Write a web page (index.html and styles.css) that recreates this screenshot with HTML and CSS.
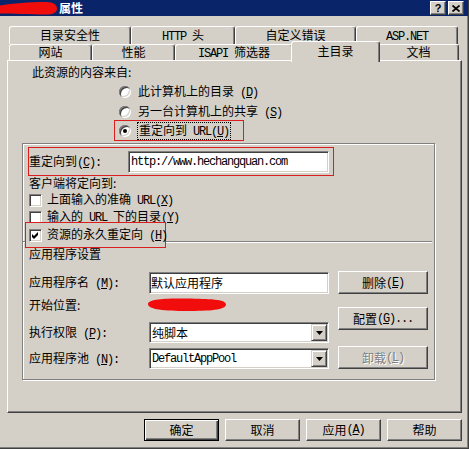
FILE: index.html
```html
<!DOCTYPE html>
<html lang="zh-CN">
<head>
<meta charset="utf-8">
<title>属性</title>
<link rel="stylesheet" href="styles.css">
</head>
<body>
<div class="win">
  <div class="titlebar">
    <svg class="scribble" viewBox="0 0 57 14" width="57" height="14"><path d="M0,4.5 C12,2.5 30,1 46,1 C54,1 57,4 57,7.5 C57,11.5 53,13.5 46,13.5 C30,13.5 12,12.5 0,12.5 Z" fill="#f20d0d"/></svg>
    <span class="title">属性</span>
    <span class="tbbtns">
      <span class="tbb">?</span>
      <span class="tbb"><svg width="8" height="7" viewBox="0 0 8 7"><path d="M0.5,0.5 L7.5,6.5 M7.5,0.5 L0.5,6.5" stroke="#000" stroke-width="1.7"/></svg></span>
    </span>
  </div>

  <div class="tabs">
    <div class="tabrow r1">
      <div class="tab t122">目录安全性</div>
      <div class="tab t104"><span class="m">HTTP </span>头</div>
      <div class="tab t121">自定义错误</div>
      <div class="tab t102"><span class="m">ASP.NET</span></div>
    </div>
    <div class="tabrow r2">
      <div class="tab t83">网站</div>
      <div class="tab t83">性能</div>
      <div class="tab t118"><span class="m">ISAPI </span>筛选器</div>
      <div class="tab sel">主目录</div>
      <div class="tab t81">文档</div>
    </div>
  </div>

  <div class="panel">
    <div class="heading">此资源的内容来自:</div>
    <div class="opts">
      <div class="opt"><span class="radio"></span><span>此计算机上的目录<span class="m"> (<u>D</u>)</span></span></div>
      <div class="opt"><span class="radio"></span><span>另一台计算机上的共享<span class="m"> (<u>S</u>)</span></span></div>
      <div class="opt hl"><span class="radio on"></span><span class="focus">重定向到<span class="m"> URL(<u>U</u>)</span></span></div>
    </div>

    <div class="frame">
      <div class="redir">
        <span class="lbl">重定向到<span class="m">(<u>C</u>):</span></span>
        <span class="field url m">http://www.hechangquan.com</span>
      </div>
      <div class="sub">客户端将定向到:</div>
      <div class="chk first"><span class="cb"></span><span>上面输入的准确<span class="m"> URL(<u>X</u>)</span></span></div>
      <div class="chk second"><span class="cb"></span><span>输入的<span class="m"> URL </span>下的目录<span class="m">(<u>Y</u>)</span></span></div>
      <div class="chk hl"><span class="cb"><svg width="7" height="7" viewBox="0 0 7 7"><polygon points="0,2 2,4 6,0 6,3 2,7 0,5" fill="#000"/></svg></span><span>资源的永久重定向<span class="m"> (<u>H</u>)</span></span></div>
      <div class="sep"></div>
      <div class="sub2">应用程序设置</div>
      <div class="app">
        <div class="app-left">
          <div class="arow a1"><span class="alabel">应用程序名<span class="m"> (<u>M</u>):</span></span><span class="field wide">默认应用程序</span></div>
          <div class="arow a2"><span class="alabel">开始位置:</span><svg class="blob" width="80" height="15" viewBox="0 0 80 15"><path d="M1,7 C1,2 18,1 40,1.5 C62,2 79,2 79,7.5 C79,13 62,14 40,14 C18,14 1,12.5 1,7 Z" fill="#f20d0d"/></svg></div>
          <div class="arow a3"><span class="alabel">执行权限<span class="m"> (<u>P</u>):</span></span><span class="select"><span>纯脚本</span><span class="dd"><svg width="7" height="4" viewBox="0 0 7 4"><polygon points="0,0 7,0 3.5,4" fill="#000"/></svg></span></span></div>
          <div class="arow a4"><span class="alabel">应用程序池<span class="m"> (<u>N</u>):</span></span><span class="select"><span class="m">DefaultAppPool</span><span class="dd"><svg width="7" height="4" viewBox="0 0 7 4"><polygon points="0,0 7,0 3.5,4" fill="#000"/></svg></span></span></div>
        </div>
        <div class="app-right">
          <div class="btn side">删除<span class="m"> (<u>E</u>)</span></div>
          <div class="btn side b2">配置<span class="m"> (<u>G</u>)...</span></div>
          <div class="btn side b3 dis">卸载<span class="m"> (<u>L</u>)</span></div>
        </div>
      </div>
    </div>
  </div>

  <div class="footer">
    <div class="btn foot def">确定</div>
    <div class="btn foot">取消</div>
    <div class="btn foot">应用<span class="m"> (<u>A</u>)</span></div>
    <div class="btn foot">帮助</div>
  </div>
</div>
</body>
</html>
```

FILE: styles.css
```css
* { box-sizing: border-box; }

body {
  margin: 0;
  font: 12px/1.2 "Noto Sans CJK SC", "Liberation Sans", sans-serif;
  color: #000;
  background: #d4d0c8;
}

.m {
  font-family: "Liberation Mono", "Noto Sans CJK SC", monospace;
  font-size: 12px;
  letter-spacing: -1.2px;
}

.win {
  width: 469px;
  height: 449px;
  background: #d4d0c8;
  border-right: 1px solid #404040;
  border-bottom: 1px solid #404040;
  box-shadow: inset -1px -1px 0 #808080;
  overflow: hidden;
}

/* title bar */
.titlebar {
  height: 16px;
  background: #0a246a;
  display: flex;
  align-items: center;
  padding-right: 4px;
}
.scribble { flex: none; display: block; }
.title {
  color: #fff;
  font-weight: bold;
  margin-left: 2px;
  line-height: 14px;
}
.tbbtns { margin-left: auto; display: flex; gap: 2px; }
.tbb {
  width: 16px;
  height: 14px;
  background: #d4d0c8;
  border: 1px solid;
  border-color: #fff #404040 #404040 #fff;
  box-shadow: inset -1px -1px 0 #808080;
  display: flex;
  align-items: center;
  justify-content: center;
  font: bold 11px/1 "Liberation Sans", sans-serif;
}

/* tabs */
.tabs { padding: 10px 0 0 9px; }
.tabrow { display: flex; height: 18px; }
.tabrow.r2 { height: 16px; }
.tab {
  flex: none;
  height: 100%;
  border: 1px solid;
  border-bottom: 0;
  border-color: #fff #404040 transparent #fff;
  box-shadow: inset -1px 0 0 #808080;
  border-radius: 3px 3px 0 0;
  text-align: center;
  line-height: 16px;
  white-space: nowrap;
}
.r2 .tab { line-height: 14px; }
.t122 { width: 122px; }
.t104 { width: 104px; }
.t121 { width: 121px; }
.t102 { width: 102px; }
.t83 { width: 83px; }
.t118 { width: 118px; }
.t81 { width: 81px; }
.r2 .tab.sel {
  width: 89px;
  height: 21px;
  margin: -3px -2px 0;
  position: relative;
  z-index: 1;
  background: #d4d0c8;
  line-height: 18px;
  align-self: flex-start;
}

/* panel */
.panel {
  margin-left: 7px;
  width: 455px;
  height: 353px;
  border: 1px solid;
  border-color: #fff #404040 #404040 #fff;
  box-shadow: inset -1px -1px 0 #808080;
  padding-top: 1px;
}
.heading { height: 20px; line-height: 20px; padding-left: 24px; }

.opts { margin-left: 106px; }
.opt {
  height: 20px;
  line-height: 14px;
  display: flex;
  align-items: center;
  gap: 7px;
  padding-left: 5px;
  white-space: nowrap;
}
.opt.hl {
  margin-top: -2px;
  height: 21px;
  width: 130px;
  border: 1px solid #d81e1e;
  padding-left: 4px;
}
.radio {
  flex: none;
  width: 12px;
  height: 12px;
  border-radius: 50%;
  background: #fff;
  box-shadow: inset 1px 1px 0 #808080, inset -1px -1px 0 #fff,
              inset 2px 2px 0 #404040, inset -2px -2px 0 #d4d0c8;
  display: flex;
  align-items: center;
  justify-content: center;
}
.radio.on::after {
  content: "";
  width: 4px;
  height: 4px;
  border-radius: 50%;
  background: #000;
}
.focus { outline: 1px dotted #000; line-height: 13px; padding: 0 1px; }

/* frame */
.frame {
  margin: 2px 0 0 14px;
  width: 413px;
  height: 237px;
  border: 1px solid #808080;
  box-shadow: inset 1px 1px 0 #fff, 1px 1px 0 #fff;
}
.redir {
  margin: 3px 0 0 5px;
  width: 306px;
  height: 29px;
  line-height: 14px;
  border: 1px solid #d81e1e;
  display: flex;
  align-items: center;
}
.redir .lbl { width: 99px; flex: none; white-space: nowrap; }

.field {
  background: #fff;
  border: 1px solid;
  border-color: #808080 #fff #fff #808080;
  box-shadow: inset 1px 1px 0 #404040, inset -1px -1px 0 #d4d0c8;
  height: 22px;
  line-height: 14px;
  display: flex;
  align-items: center;
  padding-left: 2px;
  white-space: nowrap;
}
.url { width: 201px; }
.wide { width: 180px; padding-left: 1px; }

.sub { margin-left: 6px; height: 13px; line-height: 13px; }
.chk {
  margin-left: 6px;
  height: 14px;
  line-height: 13px;
  display: flex;
  align-items: center;
  gap: 5px;
  white-space: nowrap;
}
.chk.first { margin-top: 4px; }
.chk.second { margin-top: 3px; }
.chk.hl {
  margin: -2px 0 0 2px;
  width: 141px;
  height: 26px;
  border: 1px solid #d81e1e;
  padding-left: 3px;
  position: relative;
  z-index: 1;
  background: #d4d0c8;
}
.cb {
  flex: none;
  width: 13px;
  height: 13px;
  background: #fff;
  border: 1px solid;
  border-color: #808080 #fff #fff #808080;
  box-shadow: inset 1px 1px 0 #404040, inset -1px -1px 0 #d4d0c8;
  display: flex;
  align-items: center;
  justify-content: center;
}
.cb svg { display: block; }

.sep {
  margin-top: -7px;
  width: 409px;
  height: 2px;
  border-top: 1px solid #808080;
  border-bottom: 1px solid #fff;
}
.sub2 { margin: 4px 0 0 6px; height: 14px; line-height: 14px; }

.app { display: flex; align-items: flex-start; margin-left: 6px; }
.app-left { margin-top: 11px; width: 300px; }
.arow { display: flex; align-items: center; line-height: 14px; }
.alabel { width: 120px; flex: none; white-space: nowrap; }
.a1 { height: 22px; }
.a2 { margin-top: 3px; height: 15px; }
.a3 { margin-top: 10px; height: 21px; }
.a4 { margin-top: 5px; height: 21px; }
.blob { display: block; margin-left: -2px; }

.select {
  width: 180px;
  height: 21px;
  background: #fff;
  border: 1px solid;
  border-color: #808080 #fff #fff #808080;
  box-shadow: inset 1px 1px 0 #404040, inset -1px -1px 0 #d4d0c8;
  display: flex;
  align-items: center;
  padding-left: 2px;
  white-space: nowrap;
}
.dd {
  margin-left: auto;
  margin-right: 1px;
  width: 16px;
  height: 17px;
  background: #d4d0c8;
  border: 1px solid;
  border-color: #d4d0c8 #404040 #404040 #d4d0c8;
  box-shadow: inset 1px 1px 0 #fff, inset -1px -1px 0 #808080;
  display: flex;
  align-items: center;
  justify-content: center;
}
.dd svg { display: block; }

.app-right { margin: 10px 0 0 9px; display: flex; flex-direction: column; }

.btn {
  background: #d4d0c8;
  border: 1px solid;
  border-color: #fff #404040 #404040 #fff;
  box-shadow: inset -1px -1px 0 #808080;
  display: flex;
  align-items: center;
  justify-content: center;
  line-height: 14px;
  white-space: nowrap;
}
.side { width: 90px; height: 23px; }
.b2 { margin-top: 13px; }
.b3 { margin-top: 16px; }
.dis { color: #808080; text-shadow: 1px 1px 0 #fff; }

.footer {
  display: flex;
  justify-content: flex-end;
  gap: 6px;
  margin-top: 6px;
  padding-right: 6px;
}
.foot { width: 75px; height: 22px; }
.btn.def {
  border-color: #000;
  box-shadow: inset 1px 1px 0 #fff, inset -1px -1px 0 #404040, inset -2px -2px 0 #808080;
}
```
